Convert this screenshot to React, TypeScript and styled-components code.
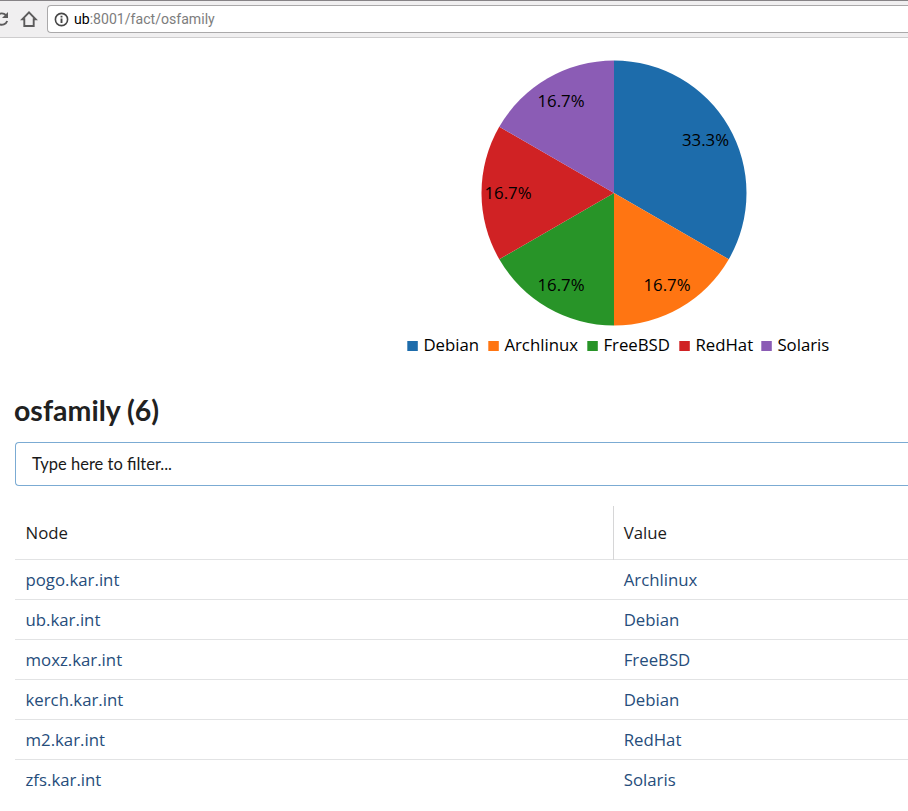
import React from "react";
import styled, { createGlobalStyle } from "styled-components";

const Global = createGlobalStyle`
  * { box-sizing: border-box; }
  html { overflow: hidden; }
  body { margin: 0; background: #fff; font-family: "Open Sans", sans-serif; }
`;

const Page = styled.div`
  width: 908px;
  height: 811px;
  overflow: hidden;
  background: #fff;
`;

const BrowserBar = styled.header`
  display: flex;
  height: 38px;
  padding-top: 4px;
  background: #f0eff0;
  border-top: 1px solid #868386;
  border-bottom: 1px solid #cecdce;
`;

const NavIcons = styled.div`
  flex: 0 0 47px;
  height: 28px;
  svg { display: block; }
`;

const AddressBar = styled.div`
  flex: 1;
  height: 28px;
  display: flex;
  align-items: center;
  gap: 5px;
  padding-left: 6px;
  background: #fff;
  border: 1px solid #aaa9aa;
  border-right: 0;
  border-radius: 4px 0 0 4px;
`;

const Url = styled.span`
  font: 14.1px/20px Roboto, sans-serif;
  color: #7d7d7d;
  b { font-weight: 400; color: #000; }
`;

const ChartArea = styled.section`
  height: 346px;
  svg { display: block; }
  text { font-size: 16.8px; fill: #000; }
`;

const Content = styled.main`
  padding-left: 15px;
`;

const Title = styled.h1`
  margin: 7px 0 0 -1px;
  height: 51px;
  font: 700 28.5px/38px Lato, sans-serif;
  color: #212121;
`;

const Filter = styled.div`
  height: 44px;
  padding-left: 16px;
  border: 1px solid #7babd3;
  border-right: 0;
  border-radius: 4px 0 0 4px;
  font: 16.5px/43px Lato, sans-serif;
  color: #191919;
`;

const Table = styled.div`
  margin-top: 20px;
`;

const Row = styled.div<{ $head?: boolean }>`
  display: grid;
  grid-template-columns: 599px 1fr;
  height: ${(p) => (p.$head ? 54 : 40)}px;
  line-height: ${(p) => (p.$head ? 54 : 40)}px;
  border-bottom: 1px solid #e2e3e4;
  color: ${(p) => (p.$head ? "#1c1c1c" : "#264d7b")};
  font-size: 16.8px;
  &:last-child { border-bottom: 0; }
`;

const Cell = styled.div<{ $divided?: boolean }>`
  padding-left: 10.5px;
  border-right: ${(p) => (p.$divided ? "1px solid #d6d6d7" : "0")};
  & + & { padding-left: 9.7px; }
`;

const slices = [
  { d: "M614 193V60.5A132.5 132.5 0 0 1 728.75 259.25Z", color: "#1d6cab", label: "33.3%", x: 682, y: 146 },
  { d: "M614 193L728.75 259.25A132.5 132.5 0 0 1 614 325.5Z", color: "#ff7512", label: "16.7%", x: 643.5, y: 291 },
  { d: "M614 193V325.5A132.5 132.5 0 0 1 499.25 259.25Z", color: "#289428", label: "16.7%", x: 537.5, y: 291 },
  { d: "M614 193L499.25 259.25A132.5 132.5 0 0 1 499.25 126.75Z", color: "#d02224", label: "16.7%", x: 484.5, y: 199 },
  { d: "M614 193L499.25 126.75A132.5 132.5 0 0 1 614 60.5Z", color: "#8b5cb5", label: "16.7%", x: 537.5, y: 107 },
];

const legend = [
  { name: "Debian", color: "#1d6cab", x: 407 },
  { name: "Archlinux", color: "#ff7512", x: 488 },
  { name: "FreeBSD", color: "#289428", x: 587 },
  { name: "RedHat", color: "#d02224", x: 679 },
  { name: "Solaris", color: "#8b5cb5", x: 761 },
];

const nodes = [
  ["pogo.kar.int", "Archlinux"],
  ["ub.kar.int", "Debian"],
  ["moxz.kar.int", "FreeBSD"],
  ["kerch.kar.int", "Debian"],
  ["m2.kar.int", "RedHat"],
  ["zfs.kar.int", "Solaris"],
];

export default function App() {
  return (
    <Page>
      <Global />
      <BrowserBar>
        <NavIcons>
          <svg width="47" height="28" viewBox="0 5 47 28" fill="none" stroke="#5c5b5c" strokeWidth="1.9">
            <path d="M6 15.2A5.7 5.7 0 1 0 7.2 21" />
            <path d="M8 12V18H2Z" fill="#5c5b5c" stroke="none" />
            <path d="M24.3 19.3H22.3L29 12.4L35.7 19.3H33.7V26H24.3Z" />
          </svg>
        </NavIcons>
        <AddressBar>
          <svg width="15" height="15" viewBox="0 0 15 15" fill="none" stroke="#474747" strokeWidth="1.6">
            <circle cx="7.5" cy="7.5" r="6.1" />
            <path d="M7.5 6.6V11M7.5 3.7V5.4" strokeWidth="1.9" />
          </svg>
          <Url><b>ub</b>:8001/fact/osfamily</Url>
        </AddressBar>
      </BrowserBar>
      <ChartArea>
        <svg width="908" height="346" viewBox="0 38 908 346">
          {slices.map((s) => <path key={s.d} d={s.d} fill={s.color} />)}
          {slices.map((s) => <text key={s.d} x={s.x} y={s.y}>{s.label}</text>)}
          {legend.map((l) => (
            <g key={l.name}>
              <rect x={l.x + 0.3} y="341" width="10.5" height="10" fill={l.color} />
              <text x={l.x + 16.4} y="351">{l.name}</text>
            </g>
          ))}
        </svg>
      </ChartArea>
      <Content>
        <Title>osfamily (6)</Title>
        <Filter>Type here to filter...</Filter>
        <Table>
          <Row $head><Cell $divided>Node</Cell><Cell>Value</Cell></Row>
          {nodes.map(([node, value]) => (
            <Row key={node}><Cell>{node}</Cell><Cell>{value}</Cell></Row>
          ))}
        </Table>
      </Content>
    </Page>
  );
}
